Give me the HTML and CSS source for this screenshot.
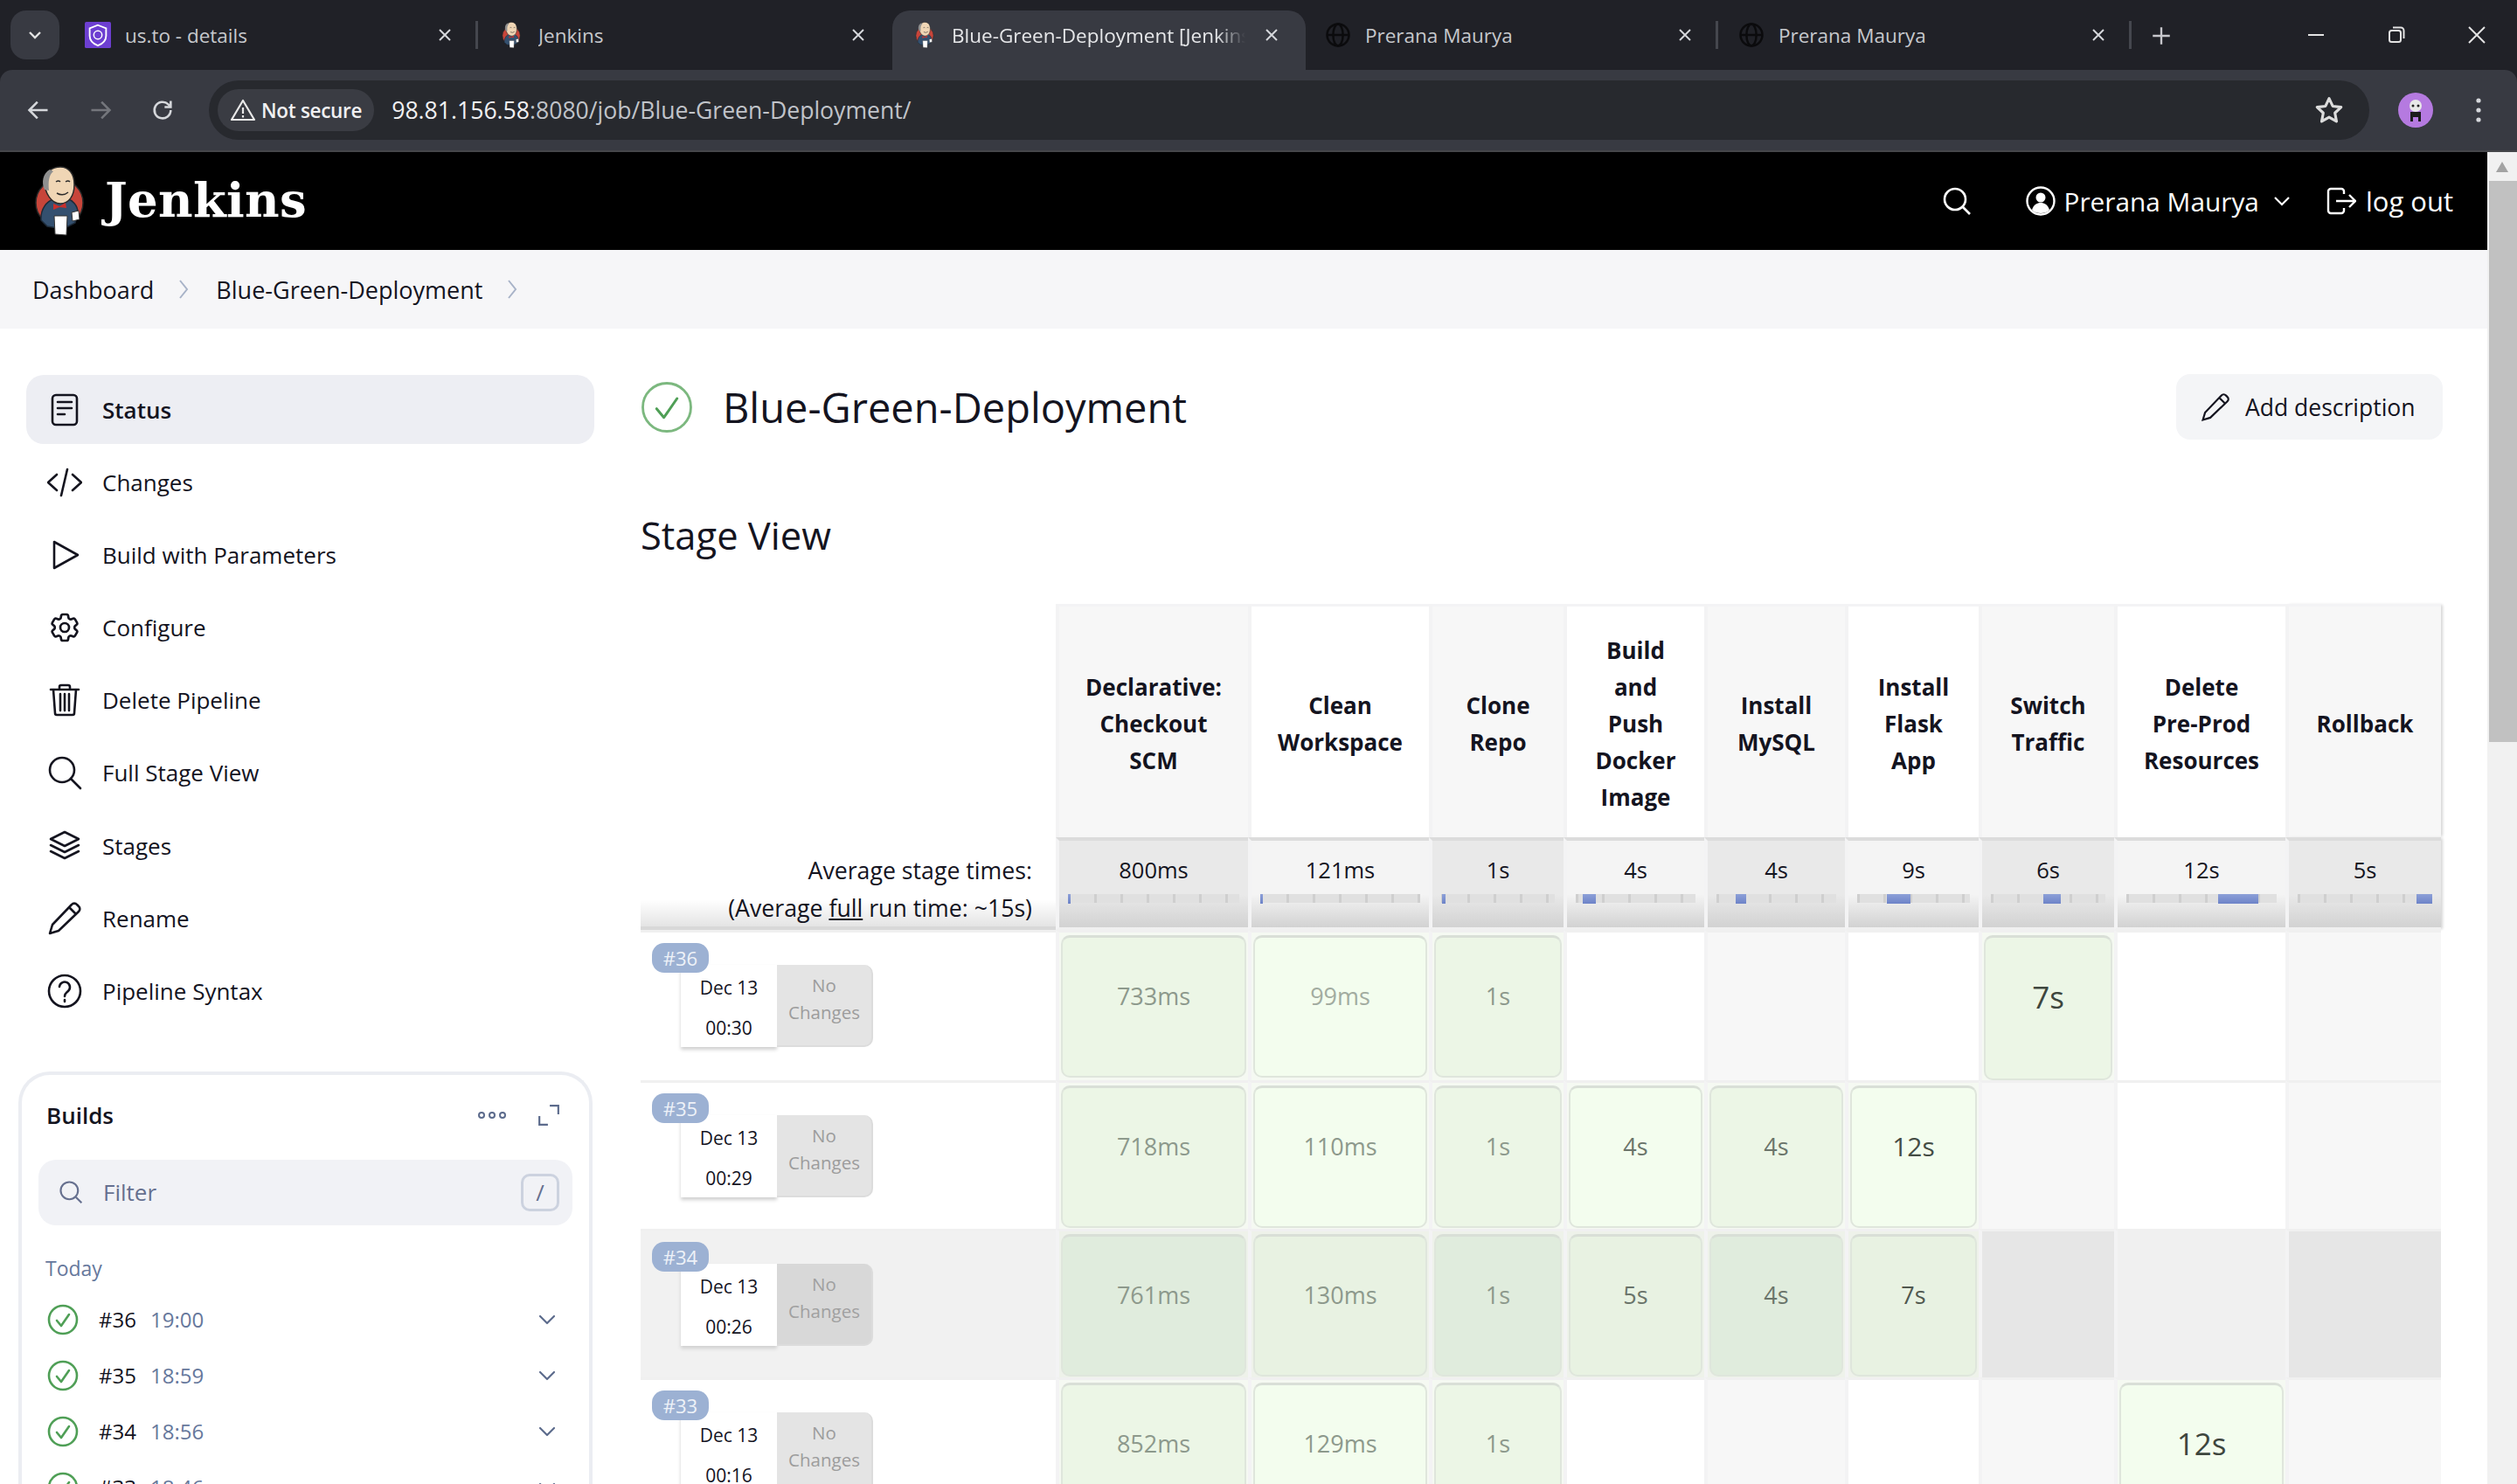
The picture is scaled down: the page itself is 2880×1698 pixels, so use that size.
FILE: index.html
```html
<!DOCTYPE html>
<html lang="en">

<head>
    <meta charset="UTF-8">
    <title>Blue-Green-Deployment [Jenkins]</title>
    <link rel="stylesheet" href="styles.css">
</head>

<body>

    <!-- shared drawings -->
    <svg class="defs" width="0" height="0">
        <symbol id="butler" viewBox="0 0 60 80">
            <circle cx="30" cy="42" r="27" fill="#c8453a" stroke="#2a2a2a" stroke-width="1.5" />
            <path d="M9 62c-1-13 7-22 14-24l15-1c7 2 13 8 13 16l-3 12-14 7-18-3z" fill="#34506f" stroke="#1d2a38" stroke-width="1.5" />
            <path d="M13 18C13 7 22 1 31 1c10 0 16 8 16 20 0 13-6 22-16 22-10 0-18-12-18-25z" fill="#f0d6b5" stroke="#2a2a2a" stroke-width="1.5" />
            <path d="M13 27c-4-8-2-19 6-23l4 2c-5 4-6 12-5 22z" fill="#8f8f8f" />
            <path d="M26 18q3-2 5 0M37 18q3-2 5 0M27 31q7 4 13-1" fill="none" stroke="#2a2a2a" stroke-width="1.5" />
            <path d="M23 43l7 3 7-4 1 6-8-1-7 3z" fill="#c9302c" />
            <path d="M24 57h15l-1 22-13-1z" fill="#fff" stroke="#333" />
            <path d="M44 53l8-2 1 10-8 2z" fill="#fff" stroke="#333" />
        </symbol>
        <symbol id="globe" viewBox="0 0 24 24">
            <g fill="none" stroke="#0b0b0d" stroke-width="2">
                <circle cx="12" cy="12" r="10" />
                <ellipse cx="12" cy="12" rx="4.5" ry="10" />
                <path d="M2 12h20" />
            </g>
        </symbol>
        <symbol id="close-x" viewBox="0 0 20 20">
            <path d="M4 4l12 12M16 4L4 16" fill="none" stroke="currentColor" stroke-width="2" />
        </symbol>
        <symbol id="ok-circle" viewBox="0 0 36 36">
            <circle cx="18" cy="18" r="16" fill="none" stroke="#4f9f56" stroke-width="2.6" />
            <path d="M11 19l5 6 9-13" fill="none" stroke="#4f9f56" stroke-width="2.6" stroke-linecap="round" stroke-linejoin="round" />
        </symbol>
        <symbol id="chev-down" viewBox="0 0 20 12">
            <path d="M2 2l8 8 8-8" fill="none" stroke="#5c6b8c" stroke-width="2.2" stroke-linecap="round" stroke-linejoin="round" />
        </symbol>
    </svg>

    <!-- chrome del navegador -->
    <div class="browser">
        <div class="tabstrip">
            <div class="tab-menu"><svg width="16" height="10" viewBox="0 0 16 10"><path d="M2 2l6 6 6-6" fill="none" stroke="#e3e3e3" stroke-width="2.4" /></svg></div>
            <div class="tab">
                <svg class="favicon" viewBox="0 0 32 32"><rect width="32" height="32" rx="2" fill="#6d3fd1" /><path d="M16 4l10 4v9c0 6-5 10-10 12C11 27 6 23 6 17V8z" fill="none" stroke="#fff" stroke-width="2" /><circle cx="16" cy="16" r="5" fill="none" stroke="#fff" stroke-width="1.6" /></svg>
                <span class="tab-title">us.to - details</span>
                <svg class="tab-close"><use href="#close-x" /></svg>
            </div>
            <div class="tab tab-sep">
                <svg class="favicon"><use href="#butler" /></svg>
                <span class="tab-title">Jenkins</span>
                <svg class="tab-close"><use href="#close-x" /></svg>
            </div>
            <div class="tab tab-active">
                <svg class="favicon"><use href="#butler" /></svg>
                <span class="tab-title">Blue-Green-Deployment [Jenkins]</span>
                <svg class="tab-close"><use href="#close-x" /></svg>
            </div>
            <div class="tab">
                <svg class="favicon"><use href="#globe" /></svg>
                <span class="tab-title">Prerana Maurya</span>
                <svg class="tab-close"><use href="#close-x" /></svg>
            </div>
            <div class="tab tab-sep tab-end">
                <svg class="favicon"><use href="#globe" /></svg>
                <span class="tab-title">Prerana Maurya</span>
                <svg class="tab-close"><use href="#close-x" /></svg>
            </div>
            <svg class="tab-new" viewBox="0 0 24 24"><path d="M12 3v18M3 12h18" fill="none" stroke="#c7c7cc" stroke-width="2.2" /></svg>
            <div class="win-controls">
                <svg viewBox="0 0 24 24"><path d="M3 12h18" stroke="#e3e3e3" stroke-width="2" /></svg>
                <svg viewBox="0 0 24 24"><rect x="4" y="7" width="13" height="13" rx="2.5" fill="none" stroke="#e3e3e3" stroke-width="2" /><path d="M8 3.500h9a3.500 3.500 0 013.500 3.500v9" fill="none" stroke="#e3e3e3" stroke-width="2" /></svg>
                <svg viewBox="0 0 24 24"><path d="M3 3l18 18M21 3L3 21" stroke="#e3e3e3" stroke-width="2" /></svg>
            </div>
        </div>
        <div class="toolbar">
            <svg class="nav-icon" viewBox="0 0 24 24"><path d="M21 12H4M11 4l-8 8 8 8" fill="none" stroke="#d5d7db" stroke-width="2.2" /></svg>
            <svg class="nav-icon" viewBox="0 0 24 24"><path d="M3 12h17M13 4l8 8-8 8" fill="none" stroke="#74767c" stroke-width="2.2" /></svg>
            <svg class="nav-icon" viewBox="0 0 24 24"><path d="M20 12a8 8 0 11-2.400-5.700L20 8.500M20 3v6h-6" fill="none" stroke="#d5d7db" stroke-width="2.2" /></svg>
            <div class="omnibox">
                <div class="secure-chip">
                    <svg width="30" height="26" viewBox="0 0 30 26"><path d="M15 2L2 24h26z" fill="none" stroke="#e8e8e8" stroke-width="2.200" stroke-linejoin="round" /><path d="M15 10v7M15 19v2.500" stroke="#e8e8e8" stroke-width="2.200" /></svg>
                    <span>Not secure</span>
                </div>
                <div class="url"><span class="url-host">98.81.156.58</span>:8080/job/Blue-Green-Deployment/</div>
                <svg class="star" viewBox="0 0 24 24"><path d="M12 2.500l2.900 6.300 6.800.8-5 4.700 1.300 6.800-6-3.400-6 3.400 1.300-6.800-5-4.700 6.800-.8z" fill="none" stroke="#dcdcdc" stroke-width="2.200" stroke-linejoin="round" /></svg>
            </div>
            <svg class="avatar" viewBox="0 0 40 40"><circle cx="20" cy="20" r="20" fill="#b57ae0" /><circle cx="20" cy="15" r="7" fill="#e8e8e8" /><path d="M14 22h12v11h-3v-5h-6v5h-3z" fill="#1c1c1c" /><circle cx="17" cy="15" r="1.500" fill="#222" /><circle cx="23" cy="15" r="1.500" fill="#222" /></svg>
            <svg class="kebab" viewBox="0 0 8 32"><circle cx="4" cy="5" r="2.600" fill="#d5d7db" /><circle cx="4" cy="16" r="2.600" fill="#d5d7db" /><circle cx="4" cy="27" r="2.600" fill="#d5d7db" /></svg>
        </div>
    </div>

    <div class="window">
        <div class="page">

            <!-- cabecera Jenkins -->
            <header class="jenkins-head">
                <svg class="logo"><use href="#butler" /></svg>
                <span class="brand">Jenkins</span>
                <svg class="head-search" viewBox="0 0 34 34"><circle cx="15" cy="15" r="12" fill="none" stroke="#fff" stroke-width="2.600" /><path d="M24 24l8 8" stroke="#fff" stroke-width="2.600" /></svg>
                <div class="head-user">
                    <svg width="34" height="34" viewBox="0 0 34 34"><circle cx="17" cy="17" r="15.500" fill="none" stroke="#fff" stroke-width="2.400" /><circle cx="17" cy="13" r="5.500" fill="#fff" /><path d="M7 27c2-6 6-8 10-8s8 2 10 8c-3 3-6 4-10 4s-7-1-10-4z" fill="#fff" /></svg>
                    <span>Prerana Maurya</span>
                    <svg class="user-chev" viewBox="0 0 20 12"><path d="M2 2l8 8 8-8" fill="none" stroke="#fff" stroke-width="2.200" /></svg>
                </div>
                <div class="head-logout">
                    <svg width="34" height="34" viewBox="0 0 34 34"><path d="M20 9V6a3 3 0 00-3-3H5a3 3 0 00-3 3v22a3 3 0 003 3h12a3 3 0 003-3v-3M11 17h21M26 10l7 7-7 7" fill="none" stroke="#fff" stroke-width="2.400" /></svg>
                    <span>log out</span>
                </div>
            </header>

            <nav class="crumbs">
                <span>Dashboard</span>
                <svg class="crumb-chev" viewBox="0 0 12 24"><path d="M2 2l8 10-8 10" fill="none" stroke="#a8b3c8" stroke-width="2" /></svg>
                <span>Blue-Green-Deployment</span>
                <svg class="crumb-chev" viewBox="0 0 12 24"><path d="M2 2l8 10-8 10" fill="none" stroke="#a8b3c8" stroke-width="2" /></svg>
            </nav>

            <div class="layout">

                <!-- columna lateral -->
                <aside class="side">
                    <ul class="tasks">
                        <li class="task task-on"><svg viewBox="0 0 40 40"><rect x="6" y="3" width="28" height="34" rx="4" /><path d="M12 11h16M12 18h16M12 25h8" /></svg>Status</li>
                        <li class="task"><svg viewBox="0 0 40 40"><path d="M11 11L1 20l10 9M29 11l10 9-10 9M23 5l-7 30" /></svg>Changes</li>
                        <li class="task"><svg viewBox="0 0 40 40"><path d="M8 5v30l27-15z" /></svg>Build with Parameters</li>
                        <li class="task"><svg viewBox="0 0 24 24" class="thin"><path d="M9.594 3.940c.09-.542.56-.94 1.110-.94h2.593c.55 0 1.020.398 1.110.94l.213 1.281c.063.374.313.686.645.870.074.040.147.083.22.127.324.196.72.257 1.075.124l1.217-.456a1.125 1.125 0 011.370.49l1.296 2.247a1.125 1.125 0 01-.26 1.431l-1.003.827c-.293.24-.438.613-.431.992a6.759 6.759 0 010 .255c-.007.378.138.75.43.99l1.005.828c.424.35.534.954.26 1.430l-1.298 2.247a1.125 1.125 0 01-1.369.491l-1.217-.456c-.355-.133-.75-.072-1.076.124a6.570 6.570 0 01-.22.128c-.331.183-.581.495-.644.869l-.213 1.280c-.09.543-.56.941-1.110.941h-2.594c-.55 0-1.020-.398-1.110-.94l-.213-1.281c-.062-.374-.312-.686-.644-.870a6.520 6.520 0 01-.22-.127c-.325-.196-.72-.257-1.076-.124l-1.217.456a1.125 1.125 0 01-1.369-.49l-1.297-2.247a1.125 1.125 0 01.26-1.431l1.004-.827c.292-.24.437-.613.43-.992a6.932 6.932 0 010-.255c.007-.378-.138-.75-.43-.99l-1.004-.828a1.125 1.125 0 01-.26-1.430l1.297-2.247a1.125 1.125 0 011.370-.491l1.216.456c.356.133.751.072 1.076-.124.072-.044.146-.087.22-.128.332-.183.582-.495.644-.869l.214-1.281z" /><circle cx="12" cy="12" r="3" /></svg>Configure</li>
                        <li class="task"><svg viewBox="0 0 40 40"><path d="M4 8h32M14 8V5a2 2 0 012-2h8a2 2 0 012 2v3M7 8l2 27a2 2 0 002 2h18a2 2 0 002-2l2-27M15 13v19M20 13v19M25 13v19" /></svg>Delete Pipeline</li>
                        <li class="task"><svg viewBox="0 0 40 40"><circle cx="17" cy="17" r="14" /><path d="M27 27l11 11" /></svg>Full Stage View</li>
                        <li class="task"><svg viewBox="0 0 40 40"><path d="M20 4l16 8-16 8-16-8zM4 19l16 8 16-8M4 26l16 8 16-8" /></svg>Stages</li>
                        <li class="task"><svg viewBox="0 0 40 40"><path d="M3 37l3-10L28 4a4 4 0 016 0l2 2a4 4 0 010 6L13 34zM25 7l8 8" /></svg>Rename</li>
                        <li class="task"><svg viewBox="0 0 40 40"><circle cx="20" cy="20" r="18" /><path d="M14 15a6 6 0 1110 5c-2 2-4 2.500-4 6M20 30v2" /></svg>Pipeline Syntax</li>
                    </ul>

                    <section class="builds">
                        <div class="builds-head">
                            <h3>Builds</h3>
                            <svg class="builds-more" viewBox="0 0 34 10"><g fill="none" stroke="#5c6b8c" stroke-width="2"><circle cx="5" cy="5" r="3" /><circle cx="17" cy="5" r="3" /><circle cx="29" cy="5" r="3" /></g></svg>
                            <svg class="builds-expand" viewBox="0 0 24 24"><path d="M13 2h9v9M11 22H2v-9" fill="none" stroke="#5c6b8c" stroke-width="2" /></svg>
                        </div>
                        <div class="filter">
                            <svg width="28" height="28" viewBox="0 0 34 34"><circle cx="15" cy="15" r="12" fill="none" stroke="#66708f" stroke-width="2.600" /><path d="M24 24l8 8" stroke="#66708f" stroke-width="2.600" /></svg>
                            <span>Filter</span>
                            <kbd>/</kbd>
                        </div>
                        <div class="builds-day">Today</div>
                        <div class="build"><svg class="ok"><use href="#ok-circle" /></svg><span class="build-num">#36</span><span class="build-time">19:00</span><svg class="build-chev"><use href="#chev-down" /></svg></div>
                        <div class="build"><svg class="ok"><use href="#ok-circle" /></svg><span class="build-num">#35</span><span class="build-time">18:59</span><svg class="build-chev"><use href="#chev-down" /></svg></div>
                        <div class="build"><svg class="ok"><use href="#ok-circle" /></svg><span class="build-num">#34</span><span class="build-time">18:56</span><svg class="build-chev"><use href="#chev-down" /></svg></div>
                        <div class="build"><svg class="ok"><use href="#ok-circle" /></svg><span class="build-num">#33</span><span class="build-time">18:46</span><svg class="build-chev"><use href="#chev-down" /></svg></div>
                    </section>
                </aside>

                <!-- contenido -->
                <main class="content">
                    <div class="job-head">
                        <svg class="job-ok" viewBox="0 0 36 36"><circle cx="18" cy="18" r="16.500" fill="none" stroke="#7cb87f" stroke-width="1.700" /><path d="M11 19l5 6 9-13" fill="none" stroke="#4f9f56" stroke-width="1.800" stroke-linecap="round" stroke-linejoin="round" /></svg>
                        <h1>Blue-Green-Deployment</h1>
                        <div class="add-desc">
                            <svg width="34" height="34" viewBox="0 0 40 40"><path d="M3 37l3-10L28 4a4 4 0 016 0l2 2a4 4 0 010 6L13 34zM25 7l8 8" fill="none" stroke="#14141f" stroke-width="2.600" /></svg>
                            Add description
                        </div>
                    </div>

                    <h2 class="stage-title">Stage View</h2>

                    <table class="stage-table">
                        <thead>
                            <tr class="stage-names">
                                <th class="corner"></th>
                                <th>Declarative:<br>Checkout<br>SCM</th>
                                <th>Clean<br>Workspace</th>
                                <th>Clone<br>Repo</th>
                                <th>Build<br>and<br>Push<br>Docker<br>Image</th>
                                <th>Install<br>MySQL</th>
                                <th>Install<br>Flask<br>App</th>
                                <th>Switch<br>Traffic</th>
                                <th>Delete<br>Pre-Prod<br>Resources</th>
                                <th>Rollback</th>
                            </tr>
                            <tr class="stage-avgs">
                                <th class="avg-label">Average stage times:<br>(Average <u>full</u> run time: ~15s)</th>
                                <th>800ms<div class="bar"><i style="left:0;width:1.500%"></i></div></th>
                                <th>121ms<div class="bar"><i style="left:0;width:1.500%"></i></div></th>
                                <th>1s<div class="bar"><i style="left:1%;width:2.500%"></i></div></th>
                                <th>4s<div class="bar"><i style="left:6%;width:11%"></i></div></th>
                                <th>4s<div class="bar"><i style="left:16%;width:9%"></i></div></th>
                                <th>9s<div class="bar"><i style="left:26%;width:21%"></i></div></th>
                                <th>6s<div class="bar"><i style="left:46%;width:15%"></i></div></th>
                                <th>12s<div class="bar"><i style="left:61%;width:27%"></i></div></th>
                                <th>5s<div class="bar"><i style="left:88%;width:12%"></i></div></th>
                            </tr>
                        </thead>
                        <tbody>
                            <tr>
                                <td class="run">
                                    <span class="run-badge">#36</span>
                                    <div class="run-card">
                                        <div class="run-date">Dec 13<br>00:30</div>
                                        <div class="run-changes">No<br>Changes</div>
                                    </div>
                                </td>
                                <td><div class="box t-faint">733ms</div></td>
                                <td><div class="box t-paler">99ms</div></td>
                                <td><div class="box t-faint">1s</div></td>
                                <td></td>
                                <td></td>
                                <td></td>
                                <td><div class="box box-tall t-big">7s</div></td>
                                <td></td>
                                <td></td>
                            </tr>
                            <tr>
                                <td class="run">
                                    <span class="run-badge">#35</span>
                                    <div class="run-card">
                                        <div class="run-date">Dec 13<br>00:29</div>
                                        <div class="run-changes">No<br>Changes</div>
                                    </div>
                                </td>
                                <td><div class="box t-faint">718ms</div></td>
                                <td><div class="box t-faint">110ms</div></td>
                                <td><div class="box t-faint">1s</div></td>
                                <td><div class="box t-mid">4s</div></td>
                                <td><div class="box t-mid">4s</div></td>
                                <td><div class="box t-large">12s</div></td>
                                <td></td>
                                <td></td>
                                <td></td>
                            </tr>
                            <tr class="row-hover">
                                <td class="run">
                                    <span class="run-badge">#34</span>
                                    <div class="run-card">
                                        <div class="run-date">Dec 13<br>00:26</div>
                                        <div class="run-changes">No<br>Changes</div>
                                    </div>
                                </td>
                                <td><div class="box t-faint">761ms</div></td>
                                <td><div class="box t-faint">130ms</div></td>
                                <td><div class="box t-faint">1s</div></td>
                                <td><div class="box t-mid">5s</div></td>
                                <td><div class="box t-mid">4s</div></td>
                                <td><div class="box t-dark">7s</div></td>
                                <td></td>
                                <td></td>
                                <td></td>
                            </tr>
                            <tr>
                                <td class="run">
                                    <span class="run-badge">#33</span>
                                    <div class="run-card">
                                        <div class="run-date">Dec 13<br>00:16</div>
                                        <div class="run-changes">No<br>Changes</div>
                                    </div>
                                </td>
                                <td><div class="box t-faint">852ms</div></td>
                                <td><div class="box t-faint">129ms</div></td>
                                <td><div class="box t-faint">1s</div></td>
                                <td></td>
                                <td></td>
                                <td></td>
                                <td></td>
                                <td><div class="box t-big">12s</div></td>
                                <td></td>
                            </tr>
                        </tbody>
                    </table>
                </main>
            </div>
        </div>

        <div class="scrollbar">
            <div class="scroll-btn"><svg width="14" height="12" viewBox="0 0 14 12"><path d="M7 0l7 12H0z" fill="#a3a3a3" /></svg></div>
            <div class="scroll-thumb"></div>
        </div>
    </div>

</body>

</html>
```

FILE: styles.css
```css
* {
    box-sizing: border-box;
}

html,
body {
    margin: 0;
    height: 1698px;
    overflow: hidden;
}

body {
    display: flex;
    flex-direction: column;
    background: #fff;
    color: #14141f;
    font-family: "Open Sans", "Noto Sans", sans-serif;
}

.defs {
    position: absolute;
}

/* ---------- browser ---------- */
.browser {
    flex: none;
    background: #202127;
}

.tabstrip {
    display: flex;
    align-items: flex-start;
    height: 80px;
    padding: 12px 0 0 12px;
    position: relative;
}

.tab-menu {
    width: 56px;
    height: 56px;
    border-radius: 18px;
    background: #383a42;
    display: flex;
    align-items: center;
    justify-content: center;
    margin-right: 7px;
}

.tab {
    width: 473px;
    height: 68px;
    display: flex;
    align-items: center;
    padding: 0 26px 12px 22px;
    color: #c6c8cc;
    font-size: 22.500px;
    border-right: 3px solid transparent;
    position: relative;
}

.tab::after {
    content: "";
    position: absolute;
    right: -2px;
    top: 12px;
    height: 32px;
    width: 3px;
    background: #45474e;
}

.tab-active {
    background: #383a42;
    border-radius: 20px 20px 0 0;
    color: #e6e7e9;
}

.tab-active::after,
.tab-sep:nth-child(3)::after {
    display: none;
}

.tab-active .tab-title {
    margin-right: 6px;
    -webkit-mask-image: linear-gradient(90deg, #000 90%, transparent);
    mask-image: linear-gradient(90deg, #000 90%, transparent);
}

.favicon {
    flex: none;
    width: 30px;
    height: 30px;
    margin-right: 16px;
}

.tab-title {
    flex: 1;
    overflow: hidden;
    white-space: nowrap;
}

.tab-close {
    flex: none;
    width: 20px;
    height: 20px;
    margin-left: 14px;
    color: #d5d7db;
}

.tab-new {
    flex: none;
    width: 26px;
    height: 26px;
    margin: 16px 0 0 20px;
}

.win-controls {
    margin-left: auto;
    display: flex;
    gap: 68px;
    padding: 16px 34px 0 0;
}

.win-controls svg {
    width: 24px;
    height: 24px;
}

.toolbar {
    height: 94px;
    background: #383a42;
    border-bottom: 2px solid #45464a;
    border-radius: 14px 14px 0 0;
    display: flex;
    align-items: center;
    padding: 12px 40px 12px 30px;
    gap: 43px;
}

.nav-icon {
    flex: none;
    width: 28px;
    height: 28px;
}

.omnibox {
    flex: 1;
    height: 68px;
    margin: 0 -10px 0 -4px;
    border-radius: 34px;
    background: #27292e;
    display: flex;
    align-items: center;
    padding: 0 29px 0 10px;
}

.secure-chip {
    display: flex;
    align-items: center;
    gap: 6px;
    height: 48px;
    padding: 0 14px;
    border-radius: 24px;
    background: #3a3c43;
    color: #f0f0f2;
    font-size: 22.500px;
    font-weight: 600;
    letter-spacing: -0.3px;
}

.url {
    margin-left: 20px;
    font-size: 26.600px;
    color: #c0c3c9;
}

.url-host {
    color: #f0f0f2;
}

.star {
    margin-left: auto;
    width: 34px;
    height: 34px;
}

.avatar {
    flex: none;
    width: 40px;
    height: 40px;
}

.kebab {
    flex: none;
    width: 8px;
    height: 32px;
    margin-left: 5px;
}

/* ---------- page ---------- */
.window {
    flex: 1;
    display: flex;
    min-height: 0;
}

.page {
    flex: 1;
    min-width: 0;
    display: flex;
    flex-direction: column;
}

.scrollbar {
    flex: none;
    width: 34px;
    background: #f1f1f1;
    display: flex;
    flex-direction: column;
}

.scroll-btn {
    height: 33px;
    display: flex;
    align-items: center;
    justify-content: center;
}

.scroll-thumb {
    height: 642px;
    margin-left: 2px;
    background: #c1c1c1;
}

.jenkins-head {
    flex: none;
    height: 112px;
    background: #000;
    color: #fff;
    display: flex;
    align-items: center;
    padding: 0 39px 0 38px;
}

.logo {
    width: 60px;
    height: 80px;
}

.brand {
    margin: 0 0 3px 22px;
    font-family: "DejaVu Serif", "Liberation Serif", serif;
    font-weight: 700;
    font-size: 54.500px;
    letter-spacing: 0.3px;
}

.head-search {
    margin: 0 0 0 auto;
    width: 34px;
    height: 34px;
}

.head-user {
    display: flex;
    align-items: center;
    margin-left: 62px;
    font-size: 29.800px;
}

.head-user span {
    margin-left: 9px;
}

.user-chev {
    width: 20px;
    height: 12px;
    margin-left: 16px;
}

.head-logout {
    display: flex;
    align-items: center;
    gap: 11px;
    margin-left: 41px;
    font-size: 31px;
}

.crumbs {
    flex: none;
    height: 90px;
    background: #f6f6f8;
    display: flex;
    align-items: center;
    padding: 0 0 0 37px;
    font-size: 27px;
    font-weight: 500;
}

.crumb-chev {
    width: 12px;
    height: 24px;
    margin: 0 31px 0 28px;
}

.layout {
    flex: 1;
    min-height: 0;
    display: flex;
    overflow: hidden;
}

/* ---------- sidebar ---------- */
.side {
    flex: none;
    width: 733px;
    padding: 53px 53px 0 30px;
}

.tasks {
    list-style: none;
    margin: 0;
    padding: 0;
    display: flex;
    flex-direction: column;
    gap: 4.200px;
}

.task {
    height: 79px;
    display: flex;
    align-items: center;
    gap: 23px;
    padding-left: 24px;
    border-radius: 20px;
    font-size: 26px;
}

.task svg {
    flex: none;
    width: 40px;
    height: 40px;
    fill: none;
    stroke: #14141f;
    stroke-width: 2.600;
    stroke-linecap: round;
    stroke-linejoin: round;
}

.task svg.thin {
    stroke-width: 1.600;
}

.task-on {
    background: #edeef3;
    font-weight: 600;
}

.builds {
    margin: 52px 0 0 -9px;
    width: 657px;
    height: 520px;
    padding: 21px 20px 0 19px;
    border: 4px solid #ebedf2;
    border-bottom: none;
    border-radius: 36px 36px 0 0;
}

.builds-head {
    display: flex;
    align-items: center;
    height: 50px;
    padding: 0 0 0 9px;
}

.builds-head h3 {
    margin: 0;
    font-size: 26px;
    font-weight: 600;
}

.builds-more {
    margin-left: auto;
    width: 34px;
    height: 10px;
}

.builds-expand {
    margin-left: 35px;
    width: 26px;
    height: 26px;
    margin-right: 13px;
}

.filter {
    margin-top: 26px;
    height: 75px;
    width: 611px;
    border-radius: 20px;
    background: #f1f2f6;
    display: flex;
    align-items: center;
    padding: 0 15px 0 23px;
    color: #66708f;
    font-size: 26px;
}

.filter span {
    margin-left: 23px;
}

.filter kbd {
    margin-left: auto;
    width: 44px;
    height: 43px;
    border: 3px solid #ccd2df;
    border-radius: 10px;
    display: flex;
    align-items: center;
    justify-content: center;
    font-family: inherit;
    font-size: 26px;
}

.builds-day {
    margin: 33px 0 0 8px;
    color: #66789c;
    font-size: 23px;
}

.build {
    height: 64px;
    display: flex;
    align-items: center;
    padding-left: 10px;
    font-size: 24px;
}

.builds-day + .build {
    margin-top: 11px;
}

.ok {
    flex: none;
    width: 36px;
    height: 36px;
}

.build-num {
    margin-left: 23px;
}

.build-time {
    margin-left: 16px;
    color: #66789c;
}

.build-chev {
    margin-left: auto;
    margin-right: 18px;
    width: 20px;
    height: 12px;
}

/* ---------- main ---------- */
.content {
    flex: 1;
    min-width: 0;
    padding: 52px 51px 0 0;
}

.job-head {
    display: flex;
    align-items: center;
    height: 75px;
}

.job-ok {
    flex: none;
    width: 60px;
    height: 60px;
}

.job-head h1 {
    margin: 0 0 0 34px;
    font-size: 47px;
    font-weight: 500;
}

.add-desc {
    margin-left: auto;
    height: 75px;
    width: 305px;
    border-radius: 16px;
    background: #f4f5f7;
    display: flex;
    align-items: center;
    gap: 17px;
    padding-left: 28px;
    font-size: 26.500px;
}

.stage-title {
    margin: 76px 0 0;
    font-size: 43.500px;
    font-weight: 500;
    line-height: 68px;
}

.stage-table {
    margin-top: 44px;
    width: 2060px;
    table-layout: fixed;
    border-collapse: separate;
    border-spacing: 0;
    text-align: center;
}

.stage-table th,
.stage-table td {
    padding: 0;
    border-left: 4px solid #f3f3f4;
}

.stage-table th:first-child,
.stage-table td:first-child {
    width: 475px;
    border-left: none;
}

.stage-table th:nth-child(2) { width: 220px; }
.stage-table th:nth-child(3) { width: 207px; }
.stage-table th:nth-child(4) { width: 154px; }
.stage-table th:nth-child(5) { width: 161px; }
.stage-table th:nth-child(6) { width: 161px; }
.stage-table th:nth-child(7) { width: 153px; }
.stage-table th:nth-child(8) { width: 155px; }
.stage-table th:nth-child(9) { width: 196px; }
.stage-table th:nth-child(10) { width: 178px; }

.stage-names th {
    height: 267px;
    padding-top: 4px;
    border-top: 3px solid #f3f3f5;
    background: #fff;
    font-size: 26px;
    line-height: 42px;
    font-weight: 700;
}

.stage-names th:nth-child(even) {
    background: #f7f7f7;
}

.stage-names th.corner {
    background: #fff;
    border-top: none;
}

.stage-names th:last-child,
.stage-avgs th:last-child {
    box-shadow: 3px 0 3px -1px #d6d6d6;
}

.stage-avgs th {
    height: 104px;
    vertical-align: top;
    padding-top: 16px;
    border-top: 4px solid #dcdcdc;
    border-bottom: 3px solid #f0f0f0;
    background: linear-gradient(#f4f4f4 62%, #d2d2d2);
    font-size: 25.500px;
    font-weight: 400;
    line-height: 34px;
}

.stage-avgs th:nth-child(even) {
    background: linear-gradient(#e9e9e9 62%, #d2d2d2);
}

.stage-avgs th.avg-label {
    border-top: none;
    border-bottom: 4px solid #d8d8d8;
    background: linear-gradient(#fff 70%, #e4e4e4);
    text-align: right;
    padding: 17px 27px 0 0;
    line-height: 42.500px;
    font-size: 26.700px;
}

.bar {
    position: relative;
    height: 10px;
    margin: 11px 10px 0;
    background:
        repeating-linear-gradient(90deg, #cfcfcf 0 3px, #e0e0e0 3px 30px);
}

.bar i {
    position: absolute;
    top: 0;
    height: 11px;
    background: linear-gradient(#8da0d8, #6d83c8);
}

.stage-table td {
    height: 170px;
    border-top: 3px solid #f0f0f0;
    background: #fff;
    font-size: 27px;
    vertical-align: top;
}

.stage-table td:nth-child(even) {
    background: #f7f7f7;
}

.stage-table td:has(.box) {
    background: #f5f9f2;
}

.box {
    height: 163px;
    margin: 3px 2px 0;
    padding-bottom: 26px;
    display: flex;
    align-items: center;
    justify-content: center;
    border: 2px solid #dfe6dc;
    border-top: 3px solid #d9dfd7;
    border-radius: 10px;
    background: #f3fdee;
    color: #6f7d6f;
}

.stage-table td:nth-child(even) .box {
    background: #ecf6e6;
}

.box-tall {
    height: 166px;
}

.t-paler { color: #a2aca0; }
.t-faint { color: #8d998c; }
.t-mid { color: #6a746a; }
.t-dark { color: #50584f; }
.t-large { color: #444c44; font-size: 30px; }
.t-big { color: #3e463e; font-size: 35px; }

.stage-table td.run {
    position: relative;
    text-align: left;
    background: #fff;
}

.run-badge {
    position: absolute;
    left: 13px;
    top: 12px;
    z-index: 1;
    width: 65px;
    height: 34px;
    border-radius: 14px;
    background: #9cb1d3;
    color: #eef2f8;
    font-size: 22px;
    line-height: 34px;
    text-align: center;
}

.run-card {
    display: flex;
    margin: 37px 0 0 46px;
    width: 220px;
    height: 94px;
    font-size: 21px;
    text-align: center;
}

.run-date {
    width: 110px;
    padding-top: 3px;
    background: #fff;
    box-shadow: 0 3px 4px #d0d0d0;
    line-height: 46px;
}

.run-changes {
    width: 110px;
    padding-bottom: 15px;
    display: flex;
    align-items: center;
    justify-content: center;
    background: #e4e4e4;
    border-radius: 0 10px 10px 0;
    color: #9c9c9c;
    font-size: 20.500px;
    line-height: 31px;
    border-right: 2px solid #dcdcdc;
    border-bottom: 2px solid #dcdcdc;
}

.stage-table .row-hover td.run {
    background: #f1f1f1;
}

.row-hover .run-changes {
    background: #d8d8d8;
    color: #a0a0a0;
}

.stage-table .row-hover td {
    background: #f0f0f0;
}

.stage-table .row-hover td:nth-child(even) {
    background: #e6e6e6;
}

.stage-table .row-hover td:has(.box) {
    background: #eef2ea;
}

.row-hover .box {
    background: #e8f2e2;
}

.stage-table .row-hover td:nth-child(even) .box {
    background: #e0ecdd;
}
```
